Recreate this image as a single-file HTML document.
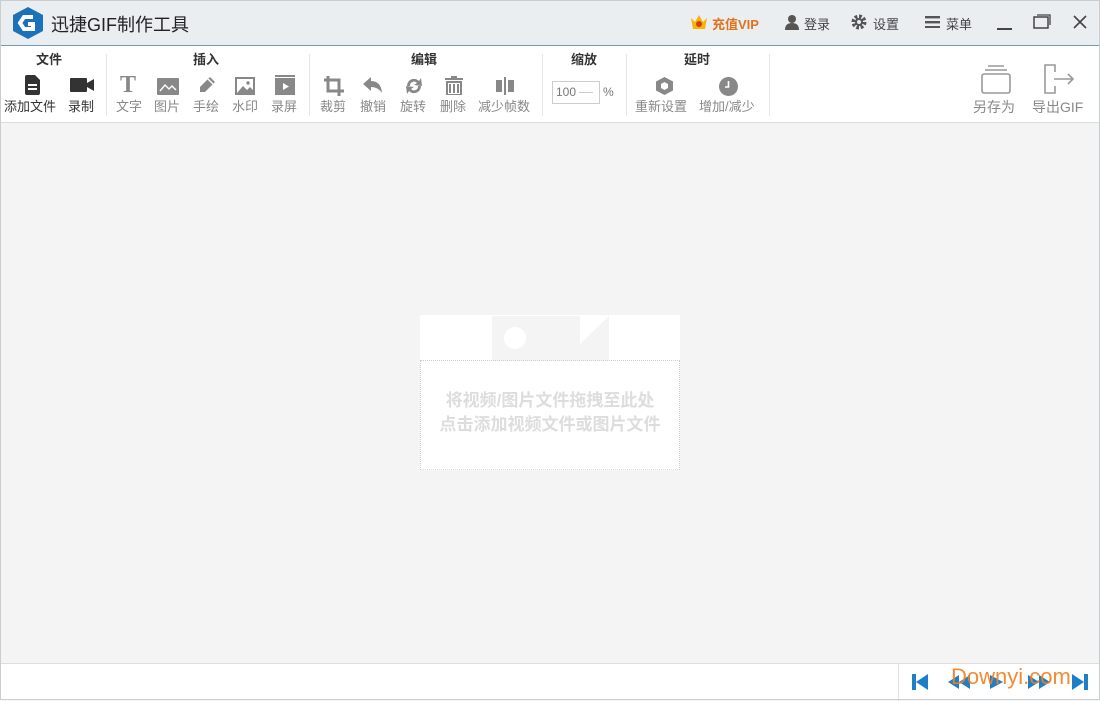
<!DOCTYPE html>
<html><head><meta charset="utf-8"><style>
*{margin:0;padding:0;box-sizing:border-box}
body{width:1100px;height:700px;overflow:hidden;position:relative;background:#f4f4f4;font-family:"Liberation Sans","Noto Sans CJK SC",sans-serif}
.a{position:absolute}
#frame{left:0;top:0;width:1100px;height:700px;border:1px solid #c9ced3;pointer-events:none;z-index:9}
#title{left:0;top:0;width:1100px;height:46px;background:#eaeef1;border-bottom:1px solid #6f9bbf}
#tb{left:0;top:46px;width:1100px;height:77px;background:#fff;border-bottom:1px solid #dcdcdc}
.h{font-size:13px;font-weight:bold;color:#333;top:3px;text-align:center}
.l{font-size:13px;color:#888;top:50px;white-space:nowrap}
.sep{top:8px;width:1px;height:62px;background:#e6e6e6}
.ic{top:30px}
#bot{left:0;top:663px;width:1100px;height:37px;background:#fff;border-top:1px solid #ddd}
.tt{font-size:13px;color:#444;top:14px}
</style></head><body>
<div id="title" class="a">
 <svg class="a" style="left:12px;top:6px" width="32" height="34" viewBox="0 0 32 34"><polygon points="16,1 31,9 31,25 16,33 1,25 1,9" fill="#1c72b8"/><path d="M21 11 L12 11 L8 17 L12 23 L21 23 L21 18 L16 18" stroke="#fff" stroke-width="4" fill="none"/></svg>
 <div class="a" style="left:51px;top:11px;font-size:18px;color:#222">迅捷GIF制作工具</div>
 <svg class="a" style="left:689px;top:13px" width="20" height="18" viewBox="0 0 20 18"><path d="M2 5 L6 9 L10 2 L14 9 L18 5 L16 16 L4 16Z" fill="#f7b500"/><circle cx="10" cy="11" r="3" fill="#d63a1a"/></svg>
 <div class="a" style="left:712px;top:14px;font-size:13px;font-weight:bold;color:#e0731e">充值VIP</div>
 <svg class="a" style="left:784px;top:14px" width="16" height="16" viewBox="0 0 16 16"><circle cx="8" cy="5" r="4" fill="#555"/><path d="M1 16 Q1 9 8 9 Q15 9 15 16Z" fill="#555"/></svg>
 <div class="a tt" style="left:804px">登录</div>
 <svg class="a" style="left:851px;top:14px" width="16" height="16" viewBox="0 0 16 16"><circle cx="8" cy="8" r="5.5" fill="none" stroke="#555" stroke-width="4" stroke-dasharray="2.6 1.7"/><circle cx="8" cy="8" r="4" fill="#555"/><circle cx="8" cy="8" r="2" fill="#eaeef1"/></svg>
 <div class="a tt" style="left:873px">设置</div>
 <svg class="a" style="left:925px;top:16px" width="15" height="12"><rect y="0" width="15" height="2.4" fill="#555"/><rect y="5" width="15" height="2.4" fill="#555"/><rect y="10" width="15" height="2.4" fill="#555"/></svg>
 <div class="a tt" style="left:946px">菜单</div>
 <div class="a" style="left:997px;top:28px;width:15px;height:2px;background:#444"></div>
 <svg class="a" style="left:1033px;top:14px" width="18" height="15"><rect x="1" y="3" width="14" height="11" fill="none" stroke="#444" stroke-width="1.5"/><path d="M4 1 H17 V11" fill="none" stroke="#444" stroke-width="1.3"/></svg>
 <svg class="a" style="left:1073px;top:15px" width="14" height="14"><path d="M1 1 L13 13 M13 1 L1 13" stroke="#444" stroke-width="1.6"/></svg>
</div>
<div id="tb" class="a">
 <div class="a h" style="left:36px">文件</div>
 <div class="a h" style="left:193px">插入</div>
 <div class="a h" style="left:411px">编辑</div>
 <div class="a h" style="left:571px">缩放</div>
 <div class="a h" style="left:684px">延时</div>
 <div class="a sep" style="left:106px"></div>
 <div class="a sep" style="left:309px"></div>
 <div class="a sep" style="left:542px"></div>
 <div class="a sep" style="left:626px"></div>
 <div class="a sep" style="left:769px"></div>
 <svg class="a ic" style="left:24px;top:29px" width="17" height="20"><path d="M1 2 Q1 0 3 0 L11 0 L16 5 L16 18 Q16 20 14 20 L3 20 Q1 20 1 18Z" fill="#333"/><rect x="4" y="9" width="9" height="2" fill="#fff"/><rect x="4" y="13" width="9" height="2" fill="#fff"/></svg>
 <svg class="a ic" style="left:70px;top:32px" width="25" height="14"><rect x="0" y="0" width="17" height="14" rx="1" fill="#333"/><path d="M17 5 L24 1 L24 13 L17 9Z" fill="#333"/></svg>
 <div class="a l" style="left:4px;color:#333">添加文件</div>
 <div class="a l" style="left:68px;color:#333">录制</div>
 <div class="a" style="left:120px;top:26px;font-family:'Liberation Serif',serif;font-size:24px;font-weight:bold;color:#888">T</div>
 <svg class="a ic" style="left:157px;top:32px" width="22" height="17"><rect width="22" height="17" rx="1" fill="#888"/><path d="M3 13 L8 7 L12 11 L15 8 L19 12" stroke="#fff" stroke-width="1.4" fill="none"/></svg>
 <svg class="a ic" style="left:198px;top:30px" width="18" height="18"><path d="M12 1 L17 6 L7 16 L2 16 L2 11Z" fill="#888"/><path d="M10 3 L15 8" stroke="#fff" stroke-width="1.4"/></svg>
 <svg class="a ic" style="left:235px;top:31px" width="20" height="18"><rect width="20" height="18" fill="#888"/><rect x="2" y="2" width="16" height="14" fill="#fff"/><path d="M2 16 L8 9 L12 13 L15 10 L18 13 L18 16Z" fill="#888"/><circle cx="13" cy="6" r="1.7" fill="#888"/></svg>
 <svg class="a ic" style="left:275px;top:29px" width="20" height="20"><rect y="3" width="20" height="17" fill="#888"/><rect width="20" height="2" fill="#888"/><path d="M8 8 L14 11.5 L8 15Z" fill="#fff"/></svg>
 <div class="a l" style="left:116px">文字</div>
 <div class="a l" style="left:154px">图片</div>
 <div class="a l" style="left:193px">手绘</div>
 <div class="a l" style="left:232px">水印</div>
 <div class="a l" style="left:271px">录屏</div>
 <svg class="a ic" style="left:324px;top:30px" width="20" height="20"><path d="M4 0 V15 H20 M0 4 H15 V20" stroke="#888" stroke-width="3" fill="none"/></svg>
 <svg class="a ic" style="left:363px;top:31px" width="20" height="17"><path d="M0 7 L8 0 L8 4 Q18 4 19 16 Q15 10 8 10 L8 14Z" fill="#888"/></svg>
 <svg class="a ic" style="left:404px;top:30px" width="20" height="20"><path d="M3 10 A7 7 0 0 1 15 5 L17 2 L18 10 L10 9 L13 7 A4 4 0 0 0 6 10Z" fill="#888"/><path d="M17 10 A7 7 0 0 1 5 15 L3 18 L2 10 L10 11 L7 13 A4 4 0 0 0 14 10Z" fill="#888"/></svg>
 <svg class="a ic" style="left:445px;top:30px" width="18" height="19"><rect x="6" y="0" width="6" height="2" fill="#888"/><rect x="0" y="2" width="18" height="2" fill="#888"/><path d="M2 6 H16 V19 H2Z M5 8 V17 M9 8 V17 M13 8 V17" fill="none" stroke="#888" stroke-width="2"/></svg>
 <svg class="a ic" style="left:496px;top:31px" width="18" height="18"><rect x="0" y="3" width="6" height="12" fill="#888"/><rect x="8" y="0" width="2" height="18" fill="#888"/><rect x="12" y="3" width="6" height="12" fill="#888"/></svg>
 <div class="a l" style="left:320px">裁剪</div>
 <div class="a l" style="left:360px">撤销</div>
 <div class="a l" style="left:400px">旋转</div>
 <div class="a l" style="left:440px">删除</div>
 <div class="a l" style="left:478px">减少帧数</div>
 <div class="a" style="left:552px;top:35px;width:48px;height:23px;border:1px solid #ccc;font-size:12px;color:#777;padding:3px 3px">100 <span style="display:inline-block;width:14px;height:1px;background:#ccc;vertical-align:middle"></span></div>
 <div class="a" style="left:603px;top:39px;font-size:12px;color:#777">%</div>
 <svg class="a ic" style="left:656px;top:31px" width="17" height="18"><polygon points="8.5,0 17,4.5 17,13.5 8.5,18 0,13.5 0,4.5" fill="#888"/><polygon points="8.5,5 12,7 12,11 8.5,13 5,11 5,7" fill="#fff"/></svg>
 <svg class="a ic" style="left:719px;top:31px" width="19" height="19"><circle cx="9.5" cy="9.5" r="9.5" fill="#888"/><path d="M9.5 4 V10 H6" stroke="#fff" stroke-width="1.6" fill="none"/></svg>
 <div class="a l" style="left:635px">重新设置</div>
 <div class="a l" style="left:699px">增加/减少</div>
 <svg class="a" style="left:980px;top:18px" width="32" height="30"><path d="M8 2 H24 M5 6 H27" stroke="#999" stroke-width="1.5"/><rect x="2" y="10" width="28" height="19" rx="2" fill="none" stroke="#999" stroke-width="1.6"/></svg>
 <svg class="a" style="left:1042px;top:17px" width="34" height="32"><path d="M13 9 V2 H3 V30 H13 V23" stroke="#999" stroke-width="1.6" fill="none"/><path d="M12 16 H31 M26 11 L31 16 L26 21" stroke="#999" stroke-width="1.6" fill="none"/></svg>
 <div class="a l" style="left:973px;font-size:14px;top:51px">另存为</div>
 <div class="a l" style="left:1032px;font-size:14px;top:51px">导出GIF</div>
</div>
<div class="a" style="left:420px;top:315px;width:260px;height:155px;background:#fff"></div>
<div class="a" style="left:492px;top:316px;width:117px;height:45px;background:#f4f4f4"></div>
<svg class="a" style="left:492px;top:316px" width="117" height="45"><circle cx="23" cy="22" r="11" fill="#fff"/><path d="M88 0 L117 0 L88 28Z" fill="#fff"/></svg>
<div class="a" style="left:420px;top:360px;width:260px;height:110px;border:1px dotted #ccc;border-bottom:1px dotted #ddd"></div>
<div class="a" style="left:420px;top:389px;width:260px;text-align:center;font-size:17px;font-weight:bold;color:#ddd;line-height:24px">将视频/图片文件拖拽至此处<br>点击添加视频文件或图片文件</div>
<div id="bot" class="a">
 <div class="a" style="left:898px;top:0;width:1px;height:37px;background:#e0e0e0"></div>
 <svg class="a" style="left:910px;top:8px" width="180" height="20" viewBox="0 0 180 20">
  <g fill="#1e7ec8"><rect x="2" y="2" width="4" height="16"/><path d="M18 2 L6 10 L18 18Z"/>
  <path d="M49 3 L38 10 L49 17Z M60 3 L49 10 L60 17Z"/>
  <path d="M80 3 L93 10 L80 17Z"/>
  <path d="M118 3 L129 10 L118 17Z M129 3 L140 10 L129 17Z"/>
  <path d="M162 2 L174 10 L162 18Z"/><rect x="174" y="2" width="4" height="16"/></g></svg>
 <div class="a" style="left:951px;top:0;font-size:22px;color:#f08020;opacity:.9">Downyi.com</div>
</div>
<div id="frame" class="a"></div>
</body></html>
